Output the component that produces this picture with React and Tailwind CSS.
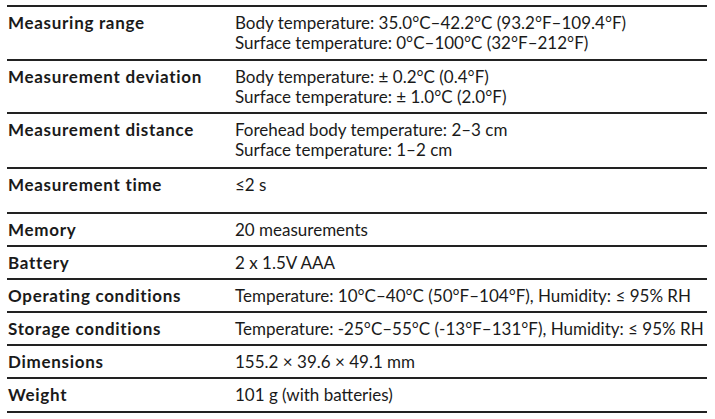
import React from 'react';

const rows = [
    { label: 'Measuring range', h: 'h-[54px]', lines: ['Body temperature: 35.0°C–42.2°C (93.2°F–109.4°F)', 'Surface temperature: 0°C–100°C (32°F–212°F)'] },
    { label: 'Measurement deviation', h: 'h-[53px]', lines: ['Body temperature: ± 0.2°C (0.4°F)', 'Surface temperature: ± 1.0°C (2.0°F)'] },
    { label: 'Measurement distance', h: 'h-[55px]', lines: ['Forehead body temperature: 2–3 cm', 'Surface temperature: 1–2 cm'] },
    { label: 'Measurement time', h: 'h-[45px]', lines: ['≤2 s'] },
    { label: 'Memory', h: 'h-[33px]', lines: ['20 measurements'] },
    { label: 'Battery', h: 'h-[33px]', lines: ['2 x 1.5V AAA'] },
    { label: 'Operating conditions', h: 'h-[33px]', lines: ['Temperature: 10°C–40°C (50°F–104°F), Humidity: ≤ 95% RH'] },
    { label: 'Storage conditions', h: 'h-[33px]', lines: ['Temperature: -25°C–55°C (-13°F–131°F), Humidity: ≤ 95% RH'] },
    { label: 'Dimensions', h: 'h-[33px]', lines: ['155.2 × 39.6 × 49.1 mm'] },
    { label: 'Weight', h: 'h-[34px]', lines: ['101 g (with batteries)'] },
];

export default function App() {
    return (
        <main className="w-[715px] h-[419px] bg-white pt-[5px] pl-[7px] font-['Lato',sans-serif] text-[17px] leading-[20px] text-[#1a1a1a]">
            <div className="w-[700px] border-b-2 border-[#222]">
                {rows.map((r) => (
                    <div key={r.label} className={`flex border-t-2 border-[#222] pt-[6px] ${r.h}`}>
                        <div className="w-[228px] pl-[1px] font-bold tracking-[0.7px]">{r.label}</div>
                        <div className="flex flex-col">
                            {r.lines.map((l) => (
                                <span key={l}>{l}</span>
                            ))}
                        </div>
                    </div>
                ))}
            </div>
        </main>
    );
}
